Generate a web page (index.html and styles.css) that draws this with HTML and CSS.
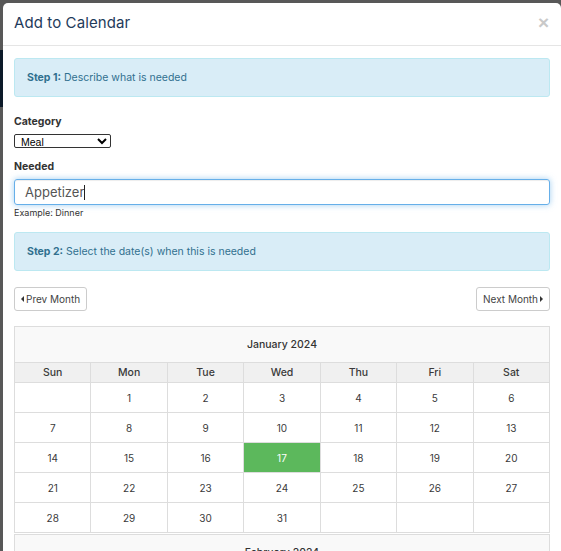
FILE: index.html
```html
<!DOCTYPE html>
<html>
<head>
<meta charset="utf-8">
<link rel="stylesheet" href="styles.css">
</head>
<body>
<div class="modal">
  <div class="modal-header">
    <h4 class="modal-title">Add to Calendar</h4>
    <span class="close">×</span>
  </div>
  <div class="modal-body">
    <div class="alert"><b>Step 1:</b> Describe what is needed</div>

    <label class="label label-cat">Category</label>
    <select class="select">
      <option>Meal</option>
    </select>

    <label class="label label-need">Needed</label>
    <div class="input"><span>Appetizer</span><span class="caret"></span></div>
    <div class="help">Example: Dinner</div>

    <div class="alert alert-2"><b>Step 2:</b> Select the date(s) when this is needed</div>

    <div class="nav">
      <button class="btn"><span class="tri tri-left"></span>Prev Month</button>
      <button class="btn">Next Month<span class="tri tri-right"></span></button>
    </div>

    <table class="cal">
      <thead>
        <tr><th colspan="7" class="month">January 2024</th></tr>
        <tr class="dow"><th>Sun</th><th>Mon</th><th>Tue</th><th>Wed</th><th>Thu</th><th>Fri</th><th>Sat</th></tr>
      </thead>
      <tbody>
        <tr><td></td><td>1</td><td>2</td><td>3</td><td>4</td><td>5</td><td>6</td></tr>
        <tr><td>7</td><td>8</td><td>9</td><td>10</td><td>11</td><td>12</td><td>13</td></tr>
        <tr><td>14</td><td>15</td><td>16</td><td class="sel">17</td><td>18</td><td>19</td><td>20</td></tr>
        <tr><td>21</td><td>22</td><td>23</td><td>24</td><td>25</td><td>26</td><td>27</td></tr>
        <tr><td>28</td><td>29</td><td>30</td><td>31</td><td></td><td></td><td></td></tr>
      </tbody>
    </table>
    <table class="cal cal-next">
      <thead>
        <tr><th colspan="7" class="month">February 2024</th></tr>
      </thead>
    </table>
  </div>
</div>
</body>
</html>
```
FILE: styles.css
```css
html, body {
  margin: 0;
  padding: 0;
  height: 100%;
  overflow: hidden;
}
body {
  background: linear-gradient(to bottom, #585858 0, #585858 50px, #0c1a29 50px, #0c1a29 107px, #585858 107px);
  font-family: Inter, "Liberation Sans", sans-serif;
  color: #333;
}
.modal {
  margin: 3px 0 0 3px;
  width: 558px;
  background: #fff;
  border-radius: 5px 5px 0 0;
  min-height: 600px;
}
.modal-header {
  height: 39px;
  padding: 0 11px 3px 11px;
  border-bottom: 1px solid #e5e5e5;
  display: flex;
  align-items: center;
  justify-content: space-between;
}
.modal-title {
  margin: 0;
  font-size: 15px;
  font-weight: 400;
  color: #1f3b5b;
  letter-spacing: 0.1px;
}
.close {
  font-size: 19px;
  font-weight: 700;
  color: #c9c9c9;
  line-height: 1;
  margin-right: 1px;
  font-family: "Liberation Sans", sans-serif;
}
.modal-body {
  padding: 12px 11px 0 11px;
  display: flex;
  flex-direction: column;
  align-items: flex-start;
}
.alert {
  align-self: stretch;
  background: #d9edf7;
  border: 1px solid #bce8f1;
  border-radius: 3px;
  color: #31708f;
  font-size: 10.5px;
  line-height: 15px;
  padding: 11px 12px;
}
.alert b { font-weight: 700; }
.label {
  display: block;
  font-size: 10.5px;
  font-weight: 700;
  line-height: 14px;
  color: #333;
}
.label-cat { margin-top: 18px; margin-bottom: 5px; }
.label-need { margin-top: 12px; margin-bottom: 5px; }
.select {
  width: 97px;
  height: 14px;
  font-family: "Liberation Sans", sans-serif;
  font-size: 10.5px;
  padding: 0 2px;
  border: 1px solid #333;
  border-radius: 2px;
  background: #fff;
  color: #000;
  box-sizing: border-box;
  line-height: 12px;
}
.input {
  align-self: stretch;
  height: 26px;
  box-sizing: border-box;
  border: 1px solid #66afe9;
  border-radius: 3px;
  box-shadow: inset 0 1px 1px rgba(0,0,0,.075), 0 0 6px rgba(102,175,233,.6);
  padding: 0 10px;
  font-size: 13px;
  color: #555;
  display: flex;
  align-items: center;
}
.caret {
  display: inline-block;
  width: 1px;
  height: 15px;
  background: #222;
}
.help {
  margin-top: 2px;
  font-size: 9px;
  line-height: 12px;
  color: #333;
}
.alert-2 { margin-top: 13px; }
.nav {
  align-self: stretch;
  display: flex;
  justify-content: space-between;
  margin-top: 16px;
}
.btn {
  height: 24px;
  box-sizing: border-box;
  background: #fff;
  border: 1px solid #ccc;
  border-radius: 3px;
  font-family: Inter, "Liberation Sans", sans-serif;
  font-size: 10px;
  color: #444;
  padding: 0 6px;
  display: flex;
  align-items: center;
  gap: 2px;
}
.tri {
  display: inline-block;
  width: 0;
  height: 0;
  border-top: 3px solid transparent;
  border-bottom: 3px solid transparent;
}
.tri-left { border-right: 3px solid #333; }
.tri-right { border-left: 3px solid #333; }
.cal {
  align-self: stretch;
  margin-top: 15px;
  border-collapse: collapse;
  table-layout: fixed;
  width: 100%;
  font-size: 10px;
  color: #3a3a3a;
}
.cal th, .cal td {
  border: 1px solid #ddd;
  text-align: center;
  padding: 0;
}
.cal .month {
  height: 35px;
  background: #f9f9f9;
  font-weight: 500;
  font-size: 10.5px;
  color: #333;
}
.cal .dow th {
  height: 19px;
  background: #f0f0f0;
  font-weight: 500;
  font-size: 10.5px;
}
.cal td {
  height: 29px;
  background: #fff;
}
.cal td.sel {
  background: #5cb85c;
  color: #fff;
}
.cal-next {
  margin-top: 1px;
}
```
